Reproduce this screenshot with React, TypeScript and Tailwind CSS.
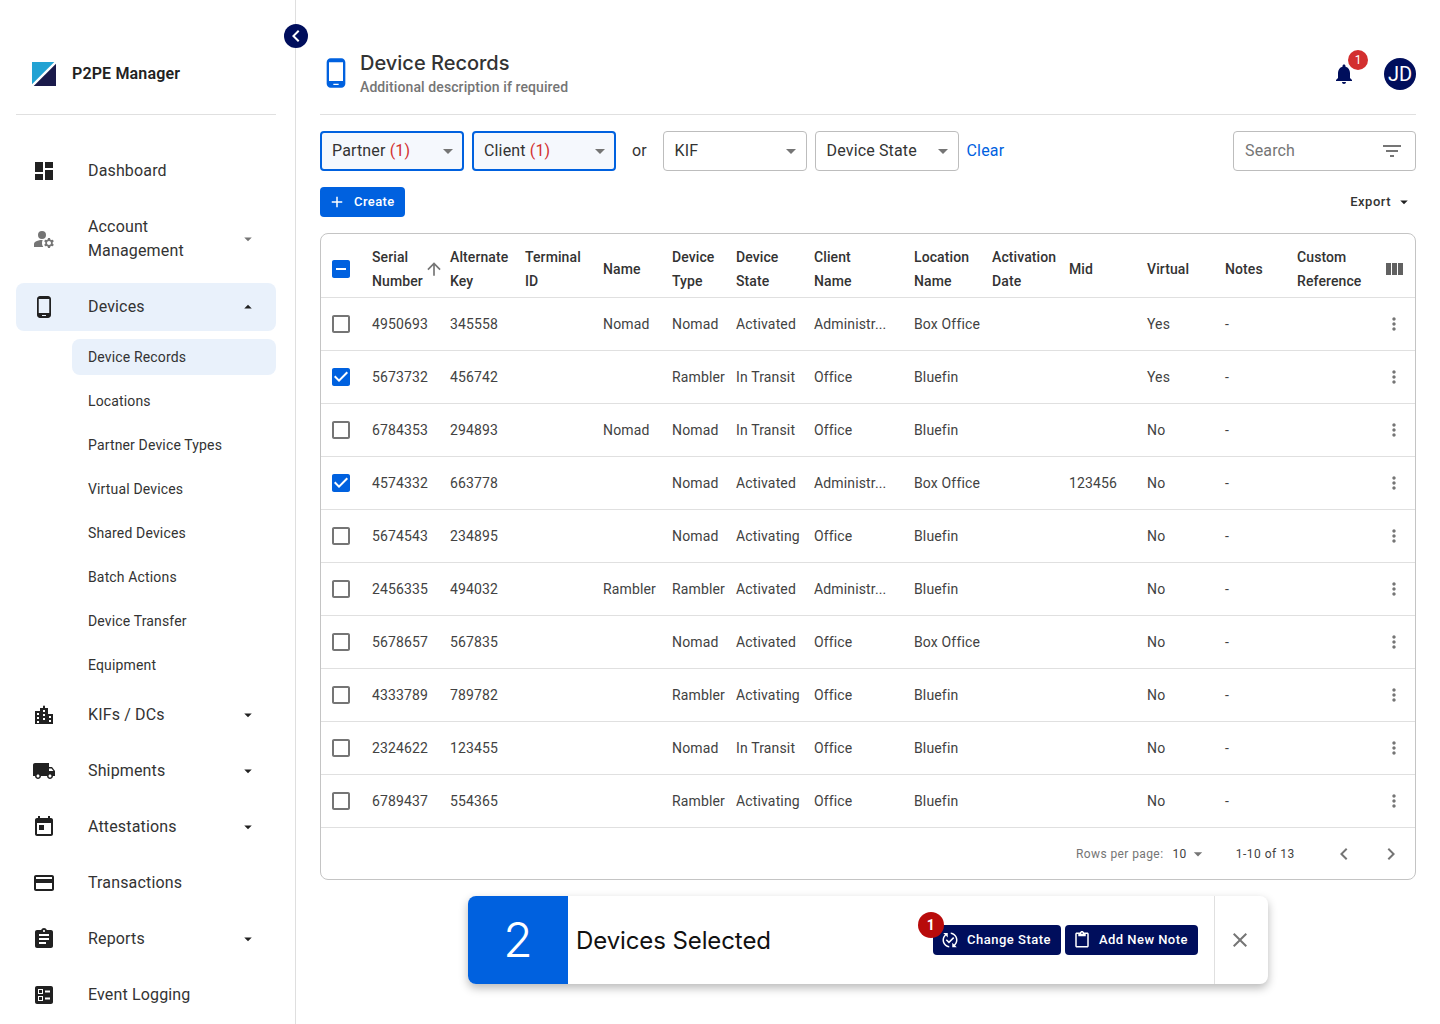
import React from "react";

const P: Record<string, string> = {
  dashboard: "M3 13h8V3H3v10zm0 8h8v-6H3v6zm10 0h8V11h-8v10zm0-18v6h8V3h-8z",
  manage: "M10.67 13.02c-.22-.01-.44-.02-.67-.02-2.42 0-4.68.67-6.61 1.82-.88.52-1.39 1.5-1.39 2.53V20h9.26c-.79-1.13-1.26-2.51-1.26-4 0-1.07.25-2.07.67-2.98zM10 12a4 4 0 1 0 0-8 4 4 0 0 0 0 8zM20.75 16c0-.22-.03-.42-.06-.63l1.14-1.01-1-1.73-1.45.49c-.32-.27-.68-.48-1.08-.63L18 11h-2l-.3 1.49c-.4.15-.76.36-1.08.63l-1.45-.49-1 1.73 1.14 1.01c-.03.21-.06.41-.06.63s.03.42.06.63l-1.14 1.01 1 1.73 1.45-.49c.32.27.68.48 1.08.63L16 21h2l.3-1.49c.4-.15.76-.36 1.08-.63l1.45.49 1-1.73-1.14-1.01c.03-.21.06-.41.06-.63zM17 18c-1.1 0-2-.9-2-2s.9-2 2-2 2 .9 2 2-.9 2-2 2z",
  phone: "M16 1H8C6.34 1 5 2.34 5 4v16c0 1.66 1.34 3 3 3h8c1.66 0 3-1.34 3-3V4c0-1.66-1.34-3-3-3zm-2 20h-4v-1h4v1zm3.25-3H6.75V4h10.5v14z",
  apartment: "M3 21V8h5V5h3V3.5a1 1 0 0 1 2 0V5h3v6h5v10H3zM5 10v2h2v-2zM5 14v2h2v-2zM5 18v2h2v-2zM11 7v2h2V7zM11 11v2h2v-2zM11 15v2h2v-2zM17 13v2h2v-2zM17 17v2h2v-2z",
  truck: "M20 8h-3V4H3c-1.1 0-2 .9-2 2v11h2c0 1.66 1.34 3 3 3s3-1.34 3-3h6c0 1.66 1.34 3 3 3s3-1.34 3-3h2v-5l-3-4zM6 18.5c-.83 0-1.5-.67-1.5-1.5s.67-1.5 1.5-1.5 1.5.67 1.5 1.5-.67 1.5-1.5 1.5zm13.5-9 1.96 2.5H17V9.5h2.5zm-1.5 9c-.83 0-1.5-.67-1.5-1.5s.67-1.5 1.5-1.5 1.5.67 1.5 1.5-.67 1.5-1.5 1.5z",
  today: "M19 3h-1V1h-2v2H8V1H6v2H5c-1.11 0-1.99.9-1.99 2L3 19c0 1.1.89 2 2 2h14c1.1 0 2-.9 2-2V5c0-1.1-.9-2-2-2zm0 16H5V8h14v11zM7 10h5v5H7z",
  card: "M20 4H4c-1.11 0-1.99.89-1.99 2L2 18c0 1.11.89 2 2 2h16c1.11 0 2-.89 2-2V6c0-1.11-.89-2-2-2zm0 14H4v-6h16v6zm0-10H4V6h16v2z",
  assignment: "M19 3h-4.18C14.4 1.84 13.3 1 12 1c-1.3 0-2.4.84-2.82 2H5c-1.1 0-2 .9-2 2v14c0 1.1.9 2 2 2h14c1.1 0 2-.9 2-2V5c0-1.1-.9-2-2-2zm-7 0c.55 0 1 .45 1 1s-.45 1-1 1-1-.45-1-1 .45-1 1-1zm2 14H7v-2h7v2zm3-4H7v-2h10v2zm0-4H7V7h10v2z",
  ballot: "M13 9.5h5v-2h-5v2zm0 7h5v-2h-5v2zm6 4.5H5c-1.1 0-2-.9-2-2V5c0-1.1.9-2 2-2h14c1.1 0 2 .9 2 2v14c0 1.1-.9 2-2 2zM6 11h5V6H6v5zm1-4h3v3H7V7zM6 18h5v-5H6v5zm1-4h3v3H7v-3z",
  bell: "M12 22c1.1 0 2-.9 2-2h-4c0 1.1.89 2 2 2zm6-6v-5c0-3.07-1.64-5.64-4.5-6.32V4c0-.83-.67-1.5-1.5-1.5s-1.5.67-1.5 1.5v.68C7.63 5.36 6 7.92 6 11v5l-2 2v1h16v-1l-2-2z",
  filter: "M10 18h4v-2h-4v2zM3 6v2h18V6H3zm3 7h12v-2H6v2z",
  columns: "M10 18h5V6h-5v12zm-6 0h5V6H4v12zM16 6v12h5V6h-5z",
  more: "M12 8c1.1 0 2-.9 2-2s-.9-2-2-2-2 .9-2 2 .9 2 2 2zm0 2c-1.1 0-2 .9-2 2s.9 2 2 2 2-.9 2-2-.9-2-2-2zm0 6c-1.1 0-2 .9-2 2s.9 2 2 2 2-.9 2-2-.9-2-2-2z",
  box: "M19 5v14H5V5h14m0-2H5c-1.1 0-2 .9-2 2v14c0 1.1.9 2 2 2h14c1.1 0 2-.9 2-2V5c0-1.1-.9-2-2-2z",
  checked: "M19 3H5c-1.11 0-2 .9-2 2v14c0 1.1.89 2 2 2h14c1.11 0 2-.9 2-2V5c0-1.1-.89-2-2-2zm-9 14l-5-5 1.41-1.41L10 14.17l7.59-7.59L19 8l-9 9z",
  indet: "M19 3H5c-1.1 0-2 .9-2 2v14c0 1.1.9 2 2 2h14c1.1 0 2-.9 2-2V5c0-1.1-.9-2-2-2zm-2 10H7v-2h10v2z",
  up: "M4 12l1.41 1.41L11 7.83V20h2V7.83l5.58 5.59L20 12l-8-8-8 8z",
  left: "M15.41 7.41 14 6l-6 6 6 6 1.41-1.41L10.83 12z",
  right: "M10 6 8.59 7.41 13.17 12l-4.58 4.59L10 18l6-6z",
  close: "M19 6.41 17.59 5 12 10.59 6.41 5 5 6.41 10.59 12 5 17.59 6.41 19 12 13.41 17.59 19 19 17.59 13.41 12z",
  add: "M19 13h-6v6h-2v-6H5v-2h6V5h2v6h6v2z",
  paste: "M19 2h-4.18C14.4.84 13.3 0 12 0c-1.3 0-2.4.84-2.82 2H5c-1.1 0-2 .9-2 2v16c0 1.1.9 2 2 2h14c1.1 0 2-.9 2-2V4c0-1.1-.9-2-2-2zm-7 0c.55 0 1 .45 1 1s-.45 1-1 1-1-.45-1-1 .45-1 1-1zm7 18H5V4h2v3h10V4h2v16z",
  change: "M17.66 9.53l-7.07 7.07-4.24-4.24 1.41-1.41 2.83 2.83 5.66-5.66 1.41 1.41zM4 12c0-2.33 1.02-4.42 2.62-5.88L9 8.5v-6H3l2.2 2.2C3.24 6.52 2 9.11 2 12c0 5.19 3.95 9.45 9 9.95v-2.02c-3.94-.49-7-3.86-7-7.93zm18 0c0-5.19-3.95-9.45-9-9.95v2.02c3.94.49 7 3.86 7 7.93 0 2.33-1.02 4.42-2.62 5.88L15 15.5v6h6l-2.2-2.2c1.96-1.82 3.2-4.41 3.2-7.3z",
  caretDown: "M7 10l5 5 5-5z",
  caretUp: "M7 14l5-5 5 5z",
};

function Icon({ name, className }: { name: string; className: string }) {
  return (
    <svg viewBox="0 0 24 24" className={className} fill="currentColor" aria-hidden="true">
      <path d={P[name]} />
    </svg>
  );
}

type Nav = { icon: string; label: string; caret?: boolean; h: string; muted?: boolean; active?: boolean };

function NavRow({ icon, label, caret, h, muted, active }: Nav) {
  return (
    <div className={`flex items-center rounded-lg pl-4 pr-[19px] ${h} ${active ? "bg-[#e9f1fb]" : ""}`}>
      <Icon name={icon} className={`w-6 h-6 shrink-0 ${muted ? "text-[#757575]" : "text-[#212121]"}`} />
      <div className="ml-8 flex-1 text-base leading-6 tracking-[0.15px] text-[#333333] pr-12">{label}</div>
      {caret && <Icon name={active ? "caretUp" : "caretDown"} className={`w-[18px] h-[18px] shrink-0 ${muted ? "text-[#757575]" : "text-[#212121]"}`} />}
    </div>
  );
}

const subs = ["Device Records", "Locations", "Partner Device Types", "Virtual Devices", "Shared Devices", "Batch Actions", "Device Transfer", "Equipment"];

function Sidebar() {
  return (
    <aside className="w-[296px] shrink-0 h-[1024px] overflow-hidden border-r border-[#dfdfdf] pl-4 pr-[19px]">
      <div className="h-[115px] border-b border-[#e0e0e0] flex items-center pl-4 pt-[33px]">
        <svg viewBox="0 0 24 24" className="w-6 h-6 shrink-0">
          <polygon points="0,0 24,0 0,24" fill="#22a2d3" />
          <polygon points="24,0 24,24 0,24" fill="#1a1a4b" />
          <line x1="24" y1="0" x2="0" y2="24" stroke="#ffffff" strokeWidth="2.4" />
        </svg>
        <span className="ml-4 text-base font-semibold text-[#212121] tracking-[0.15px]">P2PE Manager</span>
      </div>
      <nav className="pt-7 flex flex-col">
        <NavRow icon="dashboard" label="Dashboard" h="h-14" />
        <div className="mt-1">
          <NavRow icon="manage" label="Account Management" caret muted h="h-[72px]" />
        </div>
        <div className="mt-2">
          <NavRow icon="phone" label="Devices" caret active h="h-12" />
        </div>
        <div className="mt-2 pl-14 flex flex-col gap-2">
          {subs.map((s, i) => (
            <div key={s} className={`h-9 flex items-center pl-4 rounded-lg text-sm tracking-[0.15px] text-[#333333] ${i === 0 ? "bg-[#e9f1fb]" : ""}`}>{s}</div>
          ))}
        </div>
        <div className="mt-1 flex flex-col">
          <NavRow icon="apartment" label="KIFs / DCs" caret h="h-14" />
          <NavRow icon="truck" label="Shipments" caret h="h-14" />
          <NavRow icon="today" label="Attestations" caret h="h-14" />
          <NavRow icon="card" label="Transactions" h="h-14" />
          <NavRow icon="assignment" label="Reports" caret h="h-14" />
          <NavRow icon="ballot" label="Event Logging" h="h-14" />
        </div>
      </nav>
    </aside>
  );
}

function Select({ label, count, active }: { label: string; count?: number; active?: boolean }) {
  return (
    <div className={`w-36 h-10 rounded-[4px] flex items-center justify-between text-base tracking-[0.15px] text-[#333333] ${active ? "border-2 border-[#0061df] bg-[#f5f8fd] pl-[10px] pr-[2px]" : "border border-[#bdbdbd] pl-[11px] pr-[3px]"}`}>
      <span>
        {label}
        {count ? <span className="text-[#d32f2f]"> ({count})</span> : null}
      </span>
      <Icon name="caretDown" className="w-6 h-6 text-[#757575]" />
    </div>
  );
}

type Row = [string, string, string, string, string, string, string, string, string, boolean];
const rows: Row[] = [
  ["4950693", "345558", "Nomad", "Nomad", "Activated", "Administr...", "Box Office", "", "Yes", false],
  ["5673732", "456742", "", "Rambler", "In Transit", "Office", "Bluefin", "", "Yes", true],
  ["6784353", "294893", "Nomad", "Nomad", "In Transit", "Office", "Bluefin", "", "No", false],
  ["4574332", "663778", "", "Nomad", "Activated", "Administr...", "Box Office", "123456", "No", true],
  ["5674543", "234895", "", "Nomad", "Activating", "Office", "Bluefin", "", "No", false],
  ["2456335", "494032", "Rambler", "Rambler", "Activated", "Administr...", "Bluefin", "", "No", false],
  ["5678657", "567835", "", "Nomad", "Activated", "Office", "Box Office", "", "No", false],
  ["4333789", "789782", "", "Rambler", "Activating", "Office", "Bluefin", "", "No", false],
  ["2324622", "123455", "", "Nomad", "In Transit", "Office", "Bluefin", "", "No", false],
  ["6789437", "554365", "", "Rambler", "Activating", "Office", "Bluefin", "", "No", false],
];

function Th({ children }: { children?: React.ReactNode }) {
  return <th className="p-0 pt-[7px] text-left align-middle font-medium text-sm leading-6 tracking-[0.1px] text-[#333333]">{children}</th>;
}

function Td({ children }: { children?: React.ReactNode }) {
  return <td className="p-0 text-sm tracking-[0.15px] text-[#424242] whitespace-nowrap">{children}</td>;
}

function DataTable() {
  return (
    <div className="mt-4 h-[647px] border border-[#c4c4c4] rounded-lg overflow-hidden">
      <table className="table-fixed border-collapse w-[1094px]">
        <colgroup>
          <col className="w-[51px]" />
          <col className="w-[78px]" />
          <col className="w-[75px]" />
          <col className="w-[78px]" />
          <col className="w-[69px]" />
          <col className="w-[64px]" />
          <col className="w-[78px]" />
          <col className="w-[100px]" />
          <col className="w-[78px]" />
          <col className="w-[77px]" />
          <col className="w-[78px]" />
          <col className="w-[78px]" />
          <col className="w-[72px]" />
          <col className="w-[88px]" />
          <col className="w-[30px]" />
        </colgroup>
        <thead>
          <tr className="h-[63px] border-b border-[#e0e0e0]">
            <th className="p-0 pt-[7px] pl-2 align-middle"><Icon name="indet" className="w-6 h-6 text-[#0061df]" /></th>
            <Th>
              <div className="flex items-center">
                <span className="w-[52px]">Serial Number</span>
                <Icon name="up" className="w-5 h-5 text-[#757575]" />
              </div>
            </Th>
            <Th><div className="w-[62px]">Alternate Key</div></Th>
            <Th><div className="w-[60px]">Terminal ID</div></Th>
            <Th>Name</Th>
            <Th><div className="w-[50px]">Device Type</div></Th>
            <Th><div className="w-[50px]">Device State</div></Th>
            <Th><div className="w-[50px]">Client Name</div></Th>
            <Th><div className="w-[60px]">Location Name</div></Th>
            <Th><div className="w-[70px]">Activation Date</div></Th>
            <Th>Mid</Th>
            <Th>Virtual</Th>
            <Th>Notes</Th>
            <Th><div className="w-[70px]">Custom Reference</div></Th>
            <th className="p-0 pt-[7px] align-middle"><Icon name="columns" className="w-6 h-6 -ml-[3px] text-[#616161]" /></th>
          </tr>
        </thead>
        <tbody>
          {rows.map((r) => (
            <tr key={r[0]} className="h-[53px] border-b border-[#e0e0e0]">
              <td className="p-0 pl-2">
                {r[9] ? <Icon name="checked" className="w-6 h-6 text-[#0061df]" /> : <Icon name="box" className="w-6 h-6 text-[#757575]" />}
              </td>
              <Td>{r[0]}</Td>
              <Td>{r[1]}</Td>
              <Td />
              <Td>{r[2]}</Td>
              <Td>{r[3]}</Td>
              <Td>{r[4]}</Td>
              <Td>{r[5]}</Td>
              <Td>{r[6]}</Td>
              <Td />
              <Td>{r[7]}</Td>
              <Td>{r[8]}</Td>
              <Td>-</Td>
              <Td />
              <td className="p-0"><Icon name="more" className="w-5 h-5 -ml-[1px] text-[#757575]" /></td>
            </tr>
          ))}
        </tbody>
      </table>
      <div className="h-[52px] flex items-center text-xs">
        <span className="ml-[755px] tracking-[0.4px] text-[#757575]">Rows per page:</span>
        <span className="ml-[9px] pt-[1px] tracking-[0.4px] text-[#424242]">10</span>
        <Icon name="caretDown" className="w-5 h-5 ml-[1px] text-[#757575]" />
        <span className="ml-[28px] tracking-[0.5px] text-[#424242]">1-10 of 13</span>
        <Icon name="left" className="w-6 h-6 ml-[37px] text-[#757575]" />
        <Icon name="right" className="w-6 h-6 ml-[23px] text-[#757575]" />
      </div>
    </div>
  );
}

function SelectionBar() {
  return (
    <div className="mt-4 mx-auto w-[800px] h-[88px] bg-white rounded-lg shadow-[0_4px_10px_rgba(0,0,0,0.28)] flex items-stretch overflow-visible">
      <div className="w-[100px] rounded-l-lg bg-[#0061df] text-white text-[48px] flex items-center justify-center font-['Inter',sans-serif] font-light">2</div>
      <div className="ml-2 pt-[2px] flex-1 flex items-center text-[24px] text-[#111111] font-['Inter',sans-serif] tracking-[-0.1px]">Devices Selected</div>
      <div className="flex items-center gap-1 pr-4">
        <div className="relative w-[128px] h-[30px] bg-[#000e5c] rounded-[4px] flex items-center pl-[8px] text-white text-[13px] font-medium tracking-[0.5px]">
          <Icon name="change" className="w-[18px] h-[18px] mr-2 shrink-0" />
          Change State
          <span className="absolute -left-[15px] -top-[13px] w-[26px] h-[26px] rounded-full bg-[#b80b0b] text-white text-sm font-bold flex items-center justify-center">1</span>
        </div>
        <div className="w-[133px] h-[30px] bg-[#000e5c] rounded-[4px] flex items-center pl-[8px] text-white text-[13px] font-medium tracking-[0.45px]">
          <Icon name="paste" className="w-[18px] h-[18px] mr-2 shrink-0" />
          Add New Note
        </div>
      </div>
      <div className="w-[54px] border-l border-[#e0e0e0] flex items-center justify-center pr-[3px]">
        <Icon name="close" className="w-6 h-6 text-[#757575]" />
      </div>
    </div>
  );
}

export default function App() {
  return (
    <div className="relative w-[1440px] h-[1024px] overflow-hidden bg-white flex font-['Roboto',sans-serif]">
      <Sidebar />
      <span className="absolute left-[284px] top-6 w-6 h-6 rounded-full bg-[#000e5c] text-white flex items-center justify-center">
        <Icon name="left" className="w-6 h-6" />
      </span>
      <main className="flex-1 px-6 min-w-0">
        <header className="h-[115px] border-b border-[#e0e0e0] flex items-center pt-[33px]">
          <Icon name="phone" className="w-8 h-8 -mt-[1px] text-[#0061df]" />
          <div className="ml-2 mt-[1px]">
            <div className="font-['Inter',sans-serif] font-medium text-[20px] leading-6 text-[#333333]">Device Records</div>
            <div className="text-sm leading-5 mt-[2px] font-medium tracking-[0.1px] text-[#757575]">Additional description if required</div>
          </div>
          <div className="ml-auto flex items-center">
            <div className="relative mr-[28px]">
              <Icon name="bell" className="w-6 h-6 text-[#000e5c]" />
              <span className="absolute -top-[12px] left-[16px] w-5 h-5 rounded-full bg-[#d32f2f] text-white text-xs flex items-center justify-center">1</span>
            </div>
            <div className="w-8 h-8 rounded-full bg-[#000e5c] text-white text-xl flex items-center justify-center">JD</div>
          </div>
        </header>

        <div className="mt-4 flex items-center gap-2">
          <Select label="Partner" count={1} active />
          <Select label="Client" count={1} active />
          <span className="mx-2 text-base text-[#333333]">or</span>
          <Select label="KIF" />
          <Select label="Device State" />
          <span className="text-base tracking-[0.15px] text-[#0061df]">Clear</span>
          <div className="ml-auto w-[183px] h-10 rounded-[4px] border border-[#bdbdbd] flex items-center justify-between pl-[11px] text-base tracking-[0.15px] text-[#757575]">
            Search
            <Icon name="filter" className="w-6 h-6 mr-[11px] text-[#757575]" />
          </div>
        </div>

        <div className="mt-4 flex items-center justify-between">
          <div className="w-[85px] h-[30px] rounded-[4px] bg-[#0061df] text-white text-[13px] font-medium tracking-[0.4px] flex items-center pl-[8px]">
            <Icon name="add" className="w-[18px] h-[18px] mr-2" />
            Create
          </div>
          <div className="flex items-center text-[13px] font-medium tracking-[0.5px] text-[#333333] mr-[3px]">
            Export
            <Icon name="caretDown" className="w-[18px] h-[18px] ml-1 text-[#212121]" />
          </div>
        </div>

        <DataTable />
        <SelectionBar />
      </main>
    </div>
  );
}
